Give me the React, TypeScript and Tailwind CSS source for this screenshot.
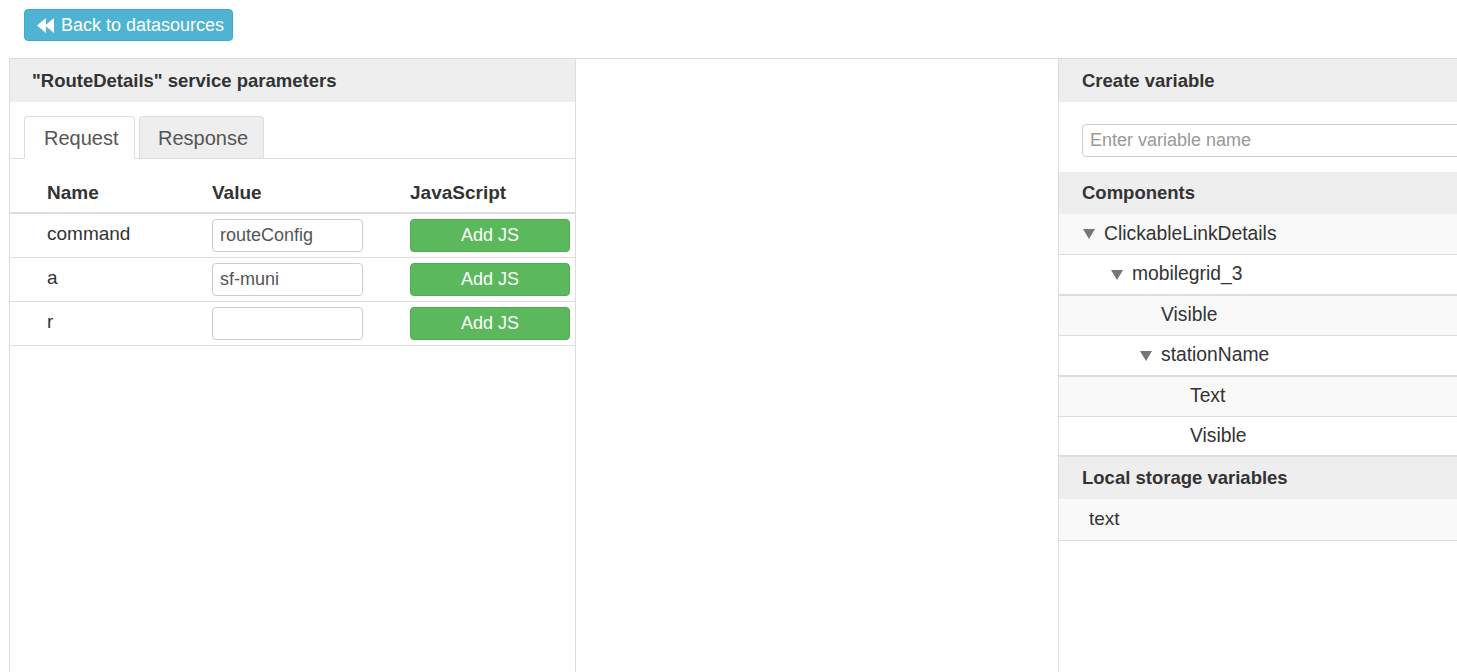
import React from 'react'

const params = [
  { name: 'command', value: 'routeConfig' },
  { name: 'a', value: 'sf-muni' },
  { name: 'r', value: '' },
]

// tree rows of the Components table, flattened
const tree = [
  { label: 'ClickableLinkDetails', toggle: true, pad: 'pl-[24px]', striped: true, row: 'h-[41px] border-b' },
  { label: 'mobilegrid_3', toggle: true, pad: 'pl-[52px]', striped: false, row: 'h-[41px] border-b-2' },
  { label: 'Visible', toggle: false, pad: 'pl-[102px]', striped: true, row: 'h-[40px] border-b' },
  { label: 'stationName', toggle: true, pad: 'pl-[81px]', striped: false, row: 'h-[41px] border-b-2' },
  { label: 'Text', toggle: false, pad: 'pl-[131px]', striped: true, row: 'h-[40px] border-b' },
  { label: 'Visible', toggle: false, pad: 'pl-[131px]', striped: false, row: 'h-[40px] border-b-2' },
]

function Caret() {
  return (
    <svg width="12" height="10" viewBox="0 0 12 10" className="shrink-0 mr-[9px]">
      <polygon points="0,0 12,0 6,10" fill="#777" />
    </svg>
  )
}

function BackIcon() {
  return (
    <svg width="18" height="15" viewBox="0 0 18 15" className="mr-[6px]">
      <polygon points="0,7.5 9,0 9,15" fill="white" />
      <polygon points="8,7.5 17,0 17,15" fill="white" />
    </svg>
  )
}

export default function App() {
  return (
    <div className="w-[1457px] h-[672px] overflow-hidden bg-white text-[#333] font-['Liberation_Sans',Arial,sans-serif]">
      {/* Top bar */}
      <div className="h-[58px] pt-[9px] pl-[24px]">
        <button className="flex items-center h-[32px] w-[209px] pl-[12px] rounded-[4px] bg-[#4fb3d3] border border-[#43a7c8] text-white text-[18px]">
          <BackIcon />
          Back to datasources
        </button>
      </div>

      <div className="flex h-[614px] ml-[9px] border-t border-[#ddd]">
        {/* Left panel */}
        <div className="w-[567px] shrink-0 border-l border-r border-[#ddd]">
          <div className="h-[43px] bg-[#eeeeee] flex items-center pl-[22px] text-[18.5px] font-bold">
            "RouteDetails" service parameters
          </div>

          <div className="mt-[14px] flex items-end gap-[4px] pl-[14px] border-b border-[#ddd] h-[43px]">
            <div className="h-[43px] -mb-px w-[111px] pl-[19px] flex items-center bg-white border border-[#ddd] border-b-white rounded-t-[4px] text-[20px] text-[#555]">
              Request
            </div>
            <div className="h-[42px] w-[125px] pl-[18px] flex items-center bg-[#eeeeee] border border-[#ddd] border-b-0 rounded-t-[4px] text-[20px] text-[#555]">
              Response
            </div>
          </div>

          <div className="grid grid-cols-[194px_198px_1fr] h-[55px] items-end pb-[5px] border-b-2 border-[#ddd] text-[19px] font-bold">
            <div className="pl-[37px]">Name</div>
            <div className="pl-[8px]">Value</div>
            <div className="pl-[8px]">JavaScript</div>
          </div>

          {params.map((p) => (
            <div
              key={p.name}
              className="grid grid-cols-[194px_198px_1fr] h-[44px] items-center border-b border-[#ddd] text-[19px]"
            >
              <div className="pl-[37px] -mt-[2px]">{p.name}</div>
              <div className="pl-[8px]">
                <input
                  readOnly
                  value={p.value}
                  className="w-[151px] h-[33px] px-[7px] border border-[#ccc] rounded-[4px] text-[18px] text-[#555] outline-none"
                />
              </div>
              <div className="pl-[8px] pr-[5px]">
                <button className="w-full h-[33px] rounded-[4px] bg-[#5cb85c] border border-[#4cae4c] text-white text-[18px]">
                  Add JS
                </button>
              </div>
            </div>
          ))}
        </div>

        {/* Middle */}
        <div className="w-[483px] shrink-0 border-r border-[#ddd]" />

        {/* Right panel */}
        <div className="w-[430px] shrink-0">
          <div className="h-[43px] bg-[#eeeeee] flex items-center pl-[23px] text-[18.5px] font-bold">
            Create variable
          </div>
          <div className="h-[70px] pt-[22px] pl-[23px]">
            <input
              placeholder="Enter variable name"
              className="w-[400px] h-[33px] px-[7px] border border-[#ccc] rounded-[4px] text-[18px] placeholder:text-[#999] outline-none"
            />
          </div>
          <div className="h-[42px] bg-[#eeeeee] flex items-center pl-[23px] text-[18.5px] font-bold">
            Components
          </div>

          {tree.map((row, i) => (
            <div
              key={i}
              className={`flex items-center ${row.row} ${row.pad} border-[#ddd] text-[19.3px] ${row.striped ? 'bg-[#f9f9f9]' : 'bg-white'}`}
            >
              {row.toggle && <Caret />}
              {row.label}
            </div>
          ))}

          <div className="h-[42px] bg-[#eeeeee] flex items-center pl-[23px] text-[18.5px] font-bold">
            Local storage variables
          </div>
          <div className="h-[42px] flex items-center pl-[30px] bg-[#f9f9f9] border-b border-[#ddd] text-[19px]">
            text
          </div>
        </div>
      </div>
    </div>
  )
}
